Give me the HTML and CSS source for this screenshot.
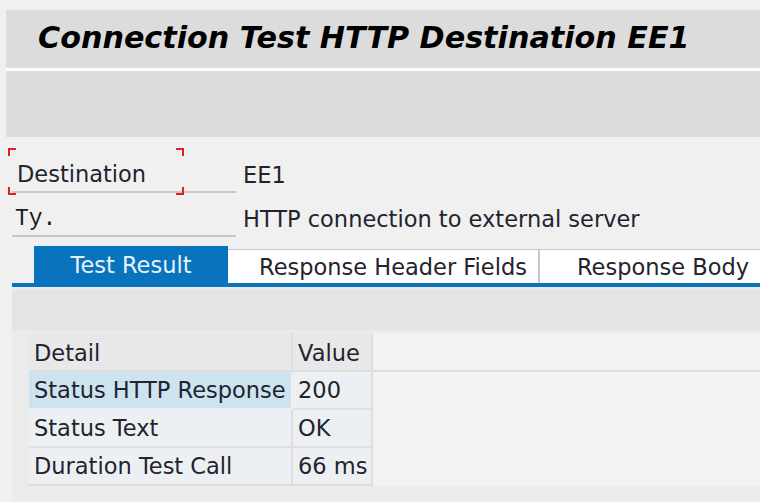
FILE: index.html
```html
<!DOCTYPE html>
<html>
<head>
<meta charset="utf-8">
<link rel="stylesheet" href="styles.css">
</head>
<body>
<div class="titlebar"><h1 class="title">Connection Test HTTP Destination EE1</h1></div>
<div class="toolbar"></div>
<div class="form">
  <div class="row row-dest">
    <div class="label focused">
      <span class="lbl-text">Destination</span>
      <i class="c tl"></i><i class="c tr"></i><i class="c bl"></i><i class="c br"></i>
    </div>
    <div class="value">EE1</div>
  </div>
  <div class="row row-ty">
    <div class="label"><span class="lbl-text mono">Ty.</span></div>
    <div class="value">HTTP connection to external server</div>
  </div>
</div>
<div class="tabs">
  <div class="tab active t1">Test Result</div>
  <div class="tab t2">Response Header Fields</div>
  <div class="tab t3">Response Body</div>
</div>
<div class="panel">
  <div class="panel-bar"></div>
  <div class="grid">
    <div class="grow head">
      <div class="cell c1">Detail</div>
      <div class="cell c2">Value</div>
      <div class="fill"></div>
    </div>
    <div class="grow">
      <div class="cell c1 sel">Status HTTP Response</div>
      <div class="cell c2">200</div>
    </div>
    <div class="grow">
      <div class="cell c1">Status Text</div>
      <div class="cell c2">OK</div>
    </div>
    <div class="grow">
      <div class="cell c1">Duration Test Call</div>
      <div class="cell c2">66 ms</div>
    </div>
  </div>
</div>
</body>
</html>
```

FILE: styles.css
```css
html, body { margin: 0; padding: 0; }
body {
  width: 760px;
  height: 502px;
  overflow: hidden;
  background: #f0f0f0;
  font-family: "DejaVu Sans", sans-serif;
  font-size: 22.5px;
  color: #23232e;
}
.titlebar {
  margin: 10px 0 0 6px;
  height: 58px;
  background: #dcdcdc;
  border-bottom: 3px solid #ffffff;
  display: flex;
  align-items: center;
}
.title {
  margin: 0 0 0 32px;
  font-family: "DejaVu Sans", sans-serif;
  font-weight: bold;
  font-style: italic;
  font-size: 30.2px;
  color: #000;
  position: relative;
  top: -2px;
}
.toolbar {
  margin-left: 6px;
  height: 66px;
  background: #dcdcdc;
}
.form { padding-top: 13px; }
.row { display: flex; align-items: stretch; }
.label {
  position: relative;
  margin-left: 12px;
  width: 224px;
  border-bottom: 2px solid #c6c6c6;
  display: flex;
  align-items: center;
}
.lbl-text { padding-left: 5px; }
.mono { font-family: "Liberation Mono", monospace; font-size: 23px; padding-top: 10px; padding-left: 3px; color: #1a1a1a; }
.row-dest { height: 43px; }
.row-dest .label { height: 41px; }
.row-ty { height: 44px; }
.row-ty .label { height: 42px; }
.value { margin-left: 7px; display: flex; align-items: center; }
.row-ty .value { padding-top: 8px; }
.row-dest .value { padding-top: 7px; }
.row-dest .lbl-text { padding-top: 7px; }
.c { position: absolute; width: 6px; height: 6px; border-color: #e02020; border-style: solid; border-width: 0; }
.c.tl { left: -4px; top: -2px; border-top-width: 2px; border-left-width: 2px; }
.c.tr { left: 164px; top: -2px; border-top-width: 2px; border-right-width: 2px; }
.c.bl { left: -4px; top: 37px; border-bottom-width: 2px; border-left-width: 2px; }
.c.br { left: 164px; top: 37px; border-bottom-width: 2px; border-right-width: 2px; }

.tabs {
  margin: 9px 0 0 12px;
  display: flex;
  align-items: flex-end;
  border-bottom: 4px solid #0a73bd;
  height: 37px;
}
.tab {
  height: 34px;
  background: #fff;
  border-top: 1px solid #c8c8c8;
  display: flex;
  align-items: center;
  justify-content: center;
  flex: none;
  color: #23232e;
  box-sizing: border-box;
}
.tab.active {
  height: 37px;
  border-top: 0;
  background: #0a73bd;
  color: #e6f2fb;
  margin-left: 22px;
}
.t1 { width: 194px; }
.t2 { width: 312px; border-right: 2px solid #c8c8c8; padding-left: 20px; }
.t3 { width: 246px; }

.panel {
  margin-left: 12px;
  height: 220px;
  background: #ebebeb;
  padding-top: 3px;
}
.panel-bar { height: 40px; background: #e4e4e4; }
.grid { margin-top: 3px; margin-left: 17px; background: #f2f2f2; }
.grow { display: flex; height: 38px; }
.grow.head { height: 37px; border-bottom: 2px solid #dedede; }
.cell {
  box-sizing: border-box;
  display: flex;
  align-items: center;
  padding-left: 5px;
  background: #edf0f3;
  border-right: 2px solid #dedede;
  border-bottom: 2px solid #dedede;
  flex: none;
  white-space: nowrap;
}
.head .cell { background: #e8e8e8; border-bottom: 0; padding-top: 2px; }
.c1 { width: 264px; }
.c2 { width: 80px; }
.cell.sel { background: #cde3f0; border-right-color: #edf0f3; border-bottom-color: #edf0f3; }
.fill { flex: 1; }
```
